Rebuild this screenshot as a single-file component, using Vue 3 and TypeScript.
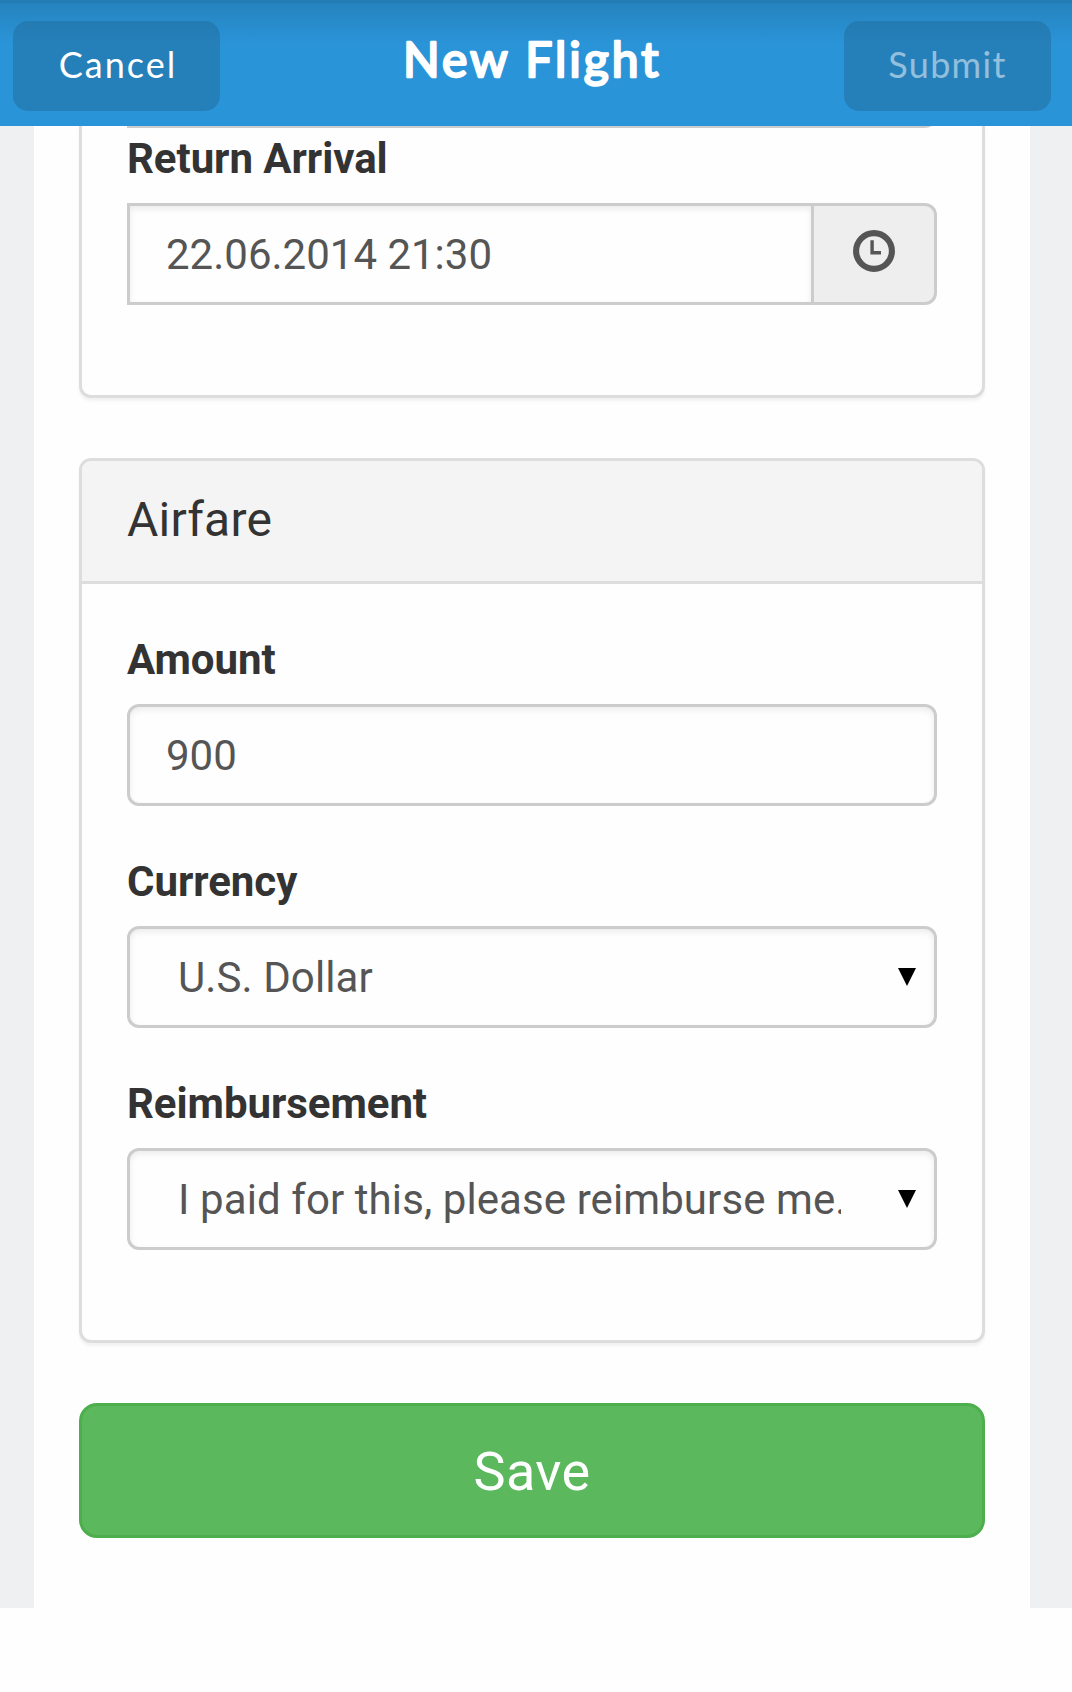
<script setup lang="ts">
interface Field {
  label: string
  value: string
  kind: 'input' | 'select'
}

const returnArrival = '22.06.2014 21:30'

const airfareFields: Field[] = [
  { label: 'Amount', value: '900', kind: 'input' },
  { label: 'Currency', value: 'U.S. Dollar', kind: 'select' },
  { label: 'Reimbursement', value: 'I paid for this, please reimburse me.', kind: 'select' },
]
</script>

<template>
  <div class="screen">
    <header class="navbar">
      <button class="nav-btn cancel" type="button">Cancel</button>
      <h1 class="title">
        <svg width="300" height="90" viewBox="0 0 300 90">
          <text x="148.8" y="56.4" text-anchor="middle" textLength="255.5">New Flight</text>
        </svg>
      </h1>
      <button class="nav-btn" type="button" disabled><span class="faded">Submit</span></button>
    </header>

    <main class="page">
      <div class="content">
        <section class="panel panel-scrolled">
          <div class="panel-body">
            <div class="input-group tucked">
              <div class="control"></div>
              <div class="addon"></div>
            </div>
            <div class="field">
              <label class="label">Return Arrival</label>
              <div class="input-group">
                <div class="control"><span class="value">{{ returnArrival }}</span></div>
                <div class="addon">
                  <svg class="clock" viewBox="0 0 42 42" width="42" height="42">
                    <circle cx="21" cy="21" r="17.9" fill="none" stroke="#555" stroke-width="6.1" />
                    <path d="M17.4 10.3h3.4v10.8h7.2v3.3H17.4z" fill="#555" />
                  </svg>
                </div>
              </div>
            </div>
          </div>
        </section>

        <section class="panel">
          <h2 class="panel-heading">Airfare</h2>
          <div class="panel-body">
            <div v-for="field in airfareFields" :key="field.label" class="field">
              <label class="label">{{ field.label }}</label>
              <div class="control" :class="{ select: field.kind === 'select' }">
                <span class="value">{{ field.value }}</span>
                <svg v-if="field.kind === 'select'" class="caret" viewBox="0 0 18 18" width="18" height="18">
                  <path d="M0 0h18L9 18z" fill="#000" />
                </svg>
              </div>
            </div>
          </div>
        </section>

        <button class="save" type="button">Save</button>
      </div>
    </main>
  </div>
</template>

<style>
body {
  margin: 0;
  background: #fefefe;
}
</style>

<style scoped>
.screen {
  width: 1072px;
  height: 1692px;
  overflow: hidden;
  background: #fefefe;
  font-family: Roboto, "Liberation Sans", sans-serif;
  color: #333;
}
.screen * {
  box-sizing: border-box;
}

.navbar {
  display: flex;
  justify-content: space-between;
  align-items: flex-start;
  height: 126px;
  padding: 21px 21px 0 13px;
  background:
    linear-gradient(#247cb5, #247cb5) 0 0 / 100% 3px no-repeat,
    linear-gradient(#2683be 3px, #2a94d8 44px);
}
.nav-btn {
  width: 207px;
  height: 90px;
  padding: 0 0 4px;
  border: 0;
  border-radius: 15px;
  background: linear-gradient(#247bb2, #257fb9 22px);
  color: #fff;
  font: 400 36px/86px Lato, sans-serif;
  letter-spacing: 1.3px;
}
.cancel {
  padding-left: 3px;
  letter-spacing: 2px;
}
.faded {
  opacity: 0.5;
}
.title {
  margin: 0;
  line-height: 0;
}
.title text {
  fill: #fff;
  stroke: #fff;
  stroke-width: 2.4px;
  stroke-linejoin: round;
  font: 400 48px Lato, sans-serif;
}

.page {
  height: 1482px;
  overflow: hidden;
  padding: 0 42px 0 34px;
  background: #eff0f2;
}
.content {
  display: flow-root;
  height: 100%;
  padding: 0 45px;
  background: #fefefe;
}

.panel {
  margin: 0 0 60px;
  border: 3px solid #ddd;
  border-radius: 12px;
  background: #fefefe;
  box-shadow: 0 3px 3px rgba(0, 0, 0, 0.05);
}
.panel-scrolled {
  border-top: 0;
  border-radius: 0 0 12px 12px;
}
.panel-scrolled .panel-body {
  display: flow-root;
  padding-top: 0;
}
.panel-heading {
  height: 123px;
  margin: 0;
  padding: 0 45px;
  border-bottom: 3px solid #ddd;
  border-radius: 9px 9px 0 0;
  background: #f4f4f4;
  font-size: 48px;
  font-weight: 400;
  line-height: 117px;
  letter-spacing: 0.2px;
}
.panel-body {
  padding: 45px;
}
.field {
  margin-bottom: 45px;
}
.label {
  display: block;
  margin-bottom: 15px;
  padding-top: 1px;
  font-size: 42px;
  font-weight: 700;
  line-height: 59px;
  letter-spacing: -0.05px;
}

.control {
  display: flex;
  align-items: center;
  height: 102px;
  padding: 2px 36px 0;
  border: 3px solid #ccc;
  border-radius: 12px;
  background: #fefefe;
  box-shadow: inset 0 3px 6px rgba(0, 0, 0, 0.075);
  color: #555;
  font-size: 42px;
  line-height: 60px;
}
.value {
  white-space: nowrap;
}
.select {
  justify-content: space-between;
  padding: 2px 18px 0 48px;
}
.select .value {
  width: 663px;
  overflow: hidden;
  letter-spacing: 0.09px;
}
.caret {
  margin-top: -2px;
}

.input-group {
  display: flex;
}
.input-group .control {
  flex: 1;
  border-radius: 0;
}
.addon {
  display: flex;
  justify-content: center;
  align-items: center;
  width: 123px;
  padding-bottom: 6px;
  border: 3px solid #ccc;
  border-left: 0;
  border-radius: 0 12px 12px 0;
  background: #eee;
}
.tucked {
  margin-top: -100px;
}

.save {
  display: block;
  width: 100%;
  height: 135px;
  padding: 2px 0 0;
  border: 3px solid #4cae4c;
  border-radius: 18px;
  background: #5cb85c;
  color: #fff;
  font: 400 54px/127px Roboto, sans-serif;
  letter-spacing: 0.4px;
}
</style>
